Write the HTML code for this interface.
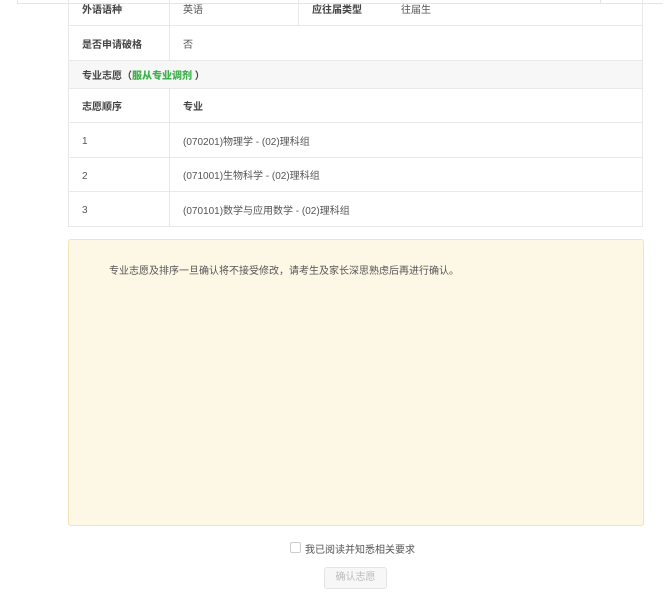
<!DOCTYPE html>
<html><head><meta charset="utf-8"><style>
*{margin:0;padding:0;box-sizing:border-box}
body{width:664px;height:605px;background:#fff;font-family:"Liberation Sans","Noto Sans CJK SC",sans-serif;font-size:10px;color:#555;position:relative;overflow:hidden}
.a{position:absolute}
.tb{position:absolute;left:68px;top:-8px;width:575px;border-left:1px solid #e8e8e8;border-right:1px solid #e8e8e8}
.r{position:relative;border-bottom:1px solid #e8e8e8}
.r span.c{position:absolute;top:0;bottom:0;display:flex;align-items:center}
.r span.n{padding-top:3px}
.b{font-weight:bold;color:#444}
.vd{position:absolute;top:0;bottom:0;width:1px;background:#e8e8e8}
</style></head><body>
<div class="a" style="left:17px;top:3px;width:646px;height:1px;background:#e4e4e4"></div>
<div class="a" style="left:17px;top:0;width:1px;height:4px;background:#e4e4e4"></div>
<div class="a" style="left:600px;top:0;width:1px;height:4px;background:#e4e4e4"></div>
<div class="tb">
<div class="r" style="height:34px"><div class="vd" style="left:100px"></div><div class="vd" style="left:229px"></div>
<span class="c b" style="left:13px">外语语种</span><span class="c" style="left:114px">英语</span><span class="c b" style="left:243px">应往届类型</span><span class="c" style="left:332px">往届生</span></div>
<div class="r" style="height:35px"><div class="vd" style="left:100px"></div><span class="c b" style="left:13px">是否申请破格</span><span class="c" style="left:114px">否</span></div>
<div class="r" style="height:28px;background:#f7f7f7"><span class="c b" style="left:13px">专业志愿（<b style="color:#3cb24a">服从专业调剂</b>&nbsp;）</span></div>
<div class="r" style="height:34px"><div class="vd" style="left:100px"></div><span class="c b" style="left:13px">志愿顺序</span><span class="c b" style="left:114px">专业</span></div>
<div class="r" style="height:35px"><div class="vd" style="left:100px"></div><span class="c n" style="left:13px">1</span><span class="c" style="left:114px">(070201)物理学 - (02)理科组</span></div>
<div class="r" style="height:34px"><div class="vd" style="left:100px"></div><span class="c n" style="left:13px">2</span><span class="c" style="left:114px">(071001)生物科学 - (02)理科组</span></div>
<div class="r" style="height:35px"><div class="vd" style="left:100px"></div><span class="c n" style="left:13px">3</span><span class="c" style="left:114px">(070101)数学与应用数学 - (02)理科组</span></div>
</div>
<div class="a" style="left:68px;top:239px;width:576px;height:287px;background:#fdf8e6;border:1px solid #f3e3b5;border-radius:3px"></div>
<div class="a" style="left:109px;top:262px;color:#555">专业志愿及排序一旦确认将不接受修改，请考生及家长深思熟虑后再进行确认。</div>
<div class="a" style="left:290px;top:542px;width:11px;height:11px;border:1px solid #ccc;border-radius:2px"></div>
<div class="a" style="left:305px;top:541px;color:#555">我已阅读并知悉相关要求</div>
<div class="a" style="left:324px;top:567px;width:63px;height:22px;border:1px solid #e4e4e4;background:#f7f7f7;border-radius:3px;color:#bbb;text-align:center;line-height:20px">确认志愿</div>
</body></html>
